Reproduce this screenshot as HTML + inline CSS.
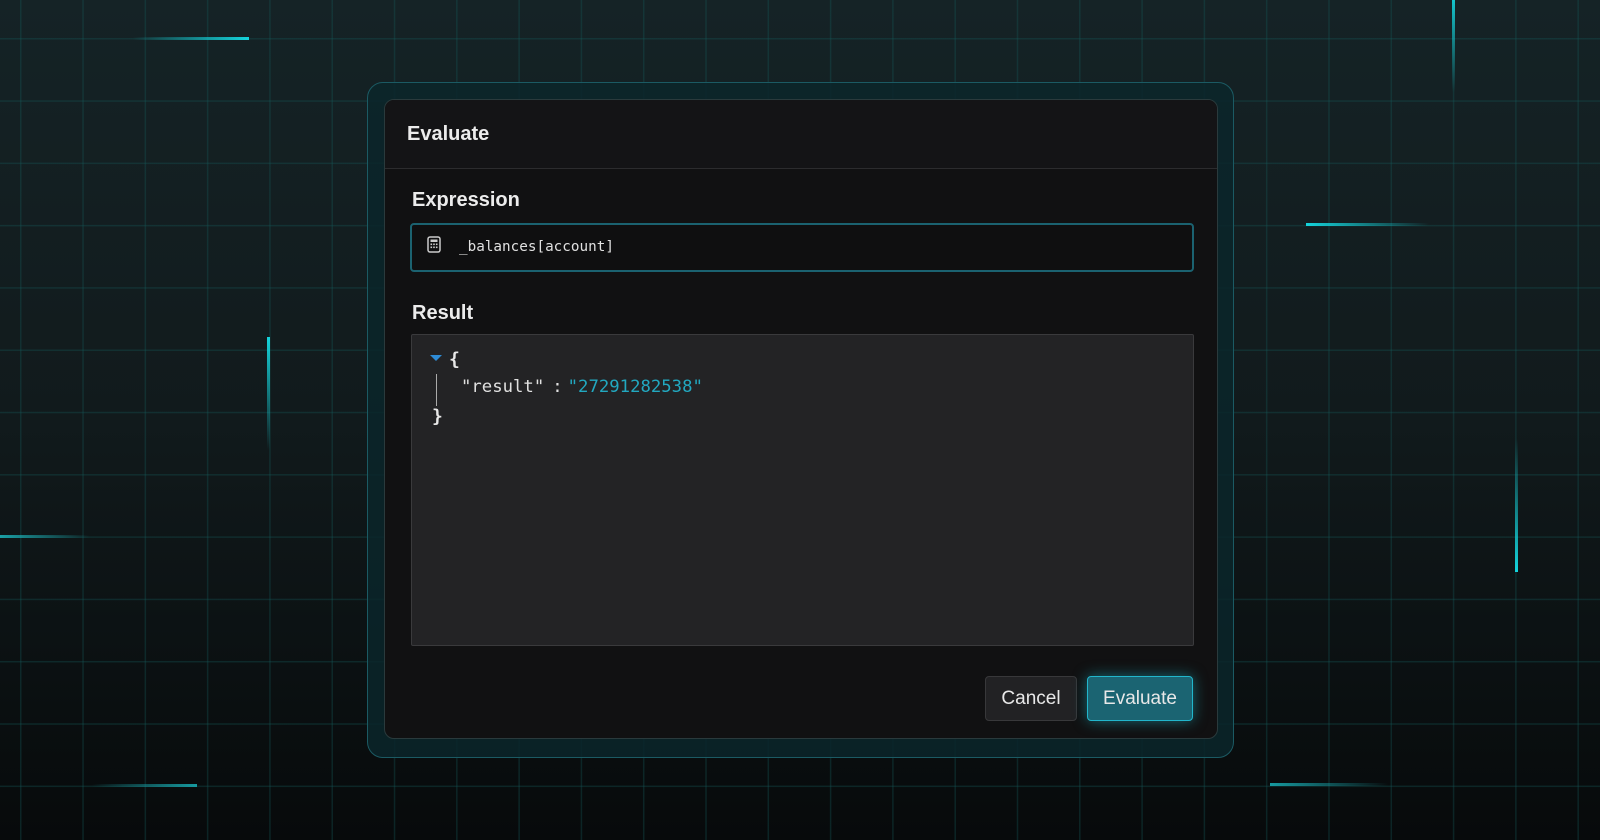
<!DOCTYPE html>
<html><head><meta charset="utf-8"><style>
*{box-sizing:border-box;margin:0;padding:0}
body{width:1600px;height:840px;overflow:hidden;position:relative;font-family:"Liberation Sans",sans-serif;
background:linear-gradient(180deg,#152326 0%,#111a1c 50%,#070a0b 100%);}
.grid{position:absolute;inset:0;
background-image:linear-gradient(90deg,rgba(20,90,90,.33) 1.5px,transparent 1.5px),linear-gradient(180deg,rgba(20,90,90,.33) 1.5px,transparent 1.5px);
background-size:62.3px 62.3px;background-position:20px 38px;}
.s{position:absolute}
.h{height:3px}
.v{width:3px}
.outer{position:absolute;left:367px;top:82px;width:867px;height:676px;border:1.5px solid #1b5a63;border-radius:16px;background:rgba(10,38,42,.85)}
.inner{position:absolute;left:384px;top:99px;width:834px;height:640px;border:1px solid #2a3a3c;border-radius:10px;background:#111112;overflow:hidden}
.hdr{height:69px;border-bottom:1px solid #2c2c2e;background:#141416;padding-left:22px;color:#ececec;font-weight:bold;font-size:20px;line-height:68px}
.lbl{position:absolute;color:#ececec;font-weight:bold;font-size:20px}
.inp{position:absolute;left:25px;top:123px;width:784px;height:49px;border:2px solid #1b6270;border-radius:4px;background:#0f0f10}
.mono{font-family:"DejaVu Sans Mono","Liberation Mono",monospace}
.res{position:absolute;left:26px;top:234px;width:783px;height:312px;border:1px solid #3a3a3c;border-radius:2px;background:#232325}
.btn{position:absolute;top:576px;height:45px;border-radius:4px;font-size:19px;color:#e8e8e8;text-align:center;line-height:43px}
</style></head><body>
<div class="grid"></div>
<div class="s h" style="left:133px;top:37px;width:116px;background:linear-gradient(90deg,transparent,#14d4dc)"></div>
<div class="s v" style="left:267px;top:337px;height:113px;background:linear-gradient(180deg,#14d4dc,transparent)"></div>
<div class="s h" style="left:0;top:535px;width:90px;background:linear-gradient(90deg,#1aa0a6,transparent)"></div>
<div class="s h" style="left:92px;top:784px;width:105px;background:linear-gradient(90deg,transparent,#169aa0)"></div>
<div class="s v" style="left:1452px;top:0;height:92px;background:linear-gradient(180deg,#14c4cc,transparent)"></div>
<div class="s h" style="left:1306px;top:223px;width:123px;background:linear-gradient(90deg,#14d4dc,transparent)"></div>
<div class="s v" style="left:1515px;top:439px;height:133px;background:linear-gradient(180deg,transparent,#14d4dc)"></div>
<div class="s h" style="left:1270px;top:783px;width:118px;background:linear-gradient(90deg,#169aa0,transparent)"></div>
<div class="outer"></div>
<div class="inner">
<div class="hdr">Evaluate</div>
<div class="lbl" style="left:27px;top:89px">Expression</div>
<div class="inp">
<svg style="position:absolute;left:15px;top:11px" width="14" height="17" viewBox="0 0 14 17"><rect x="1" y="1" width="12" height="15" rx="2" fill="none" stroke="#ccc" stroke-width="1.5"/><rect x="3.5" y="3.5" width="7" height="2.5" fill="#ccc"/><g fill="#ccc"><rect x="3.5" y="7.5" width="1.6" height="1.6"/><rect x="6.2" y="7.5" width="1.6" height="1.6"/><rect x="8.9" y="7.5" width="1.6" height="1.6"/><rect x="3.5" y="10.5" width="1.6" height="1.6"/><rect x="6.2" y="10.5" width="1.6" height="1.6"/><rect x="8.9" y="10.5" width="1.6" height="1.6"/></g></svg>
<div class="mono" style="position:absolute;left:47px;top:14px;font-size:14.3px;color:#e0e0e0">_balances[account]</div>
</div>
<div class="lbl" style="left:27px;top:202px">Result</div>
<div class="res mono">
<div style="position:absolute;left:18px;top:20px;width:0;height:0;border-left:6px solid transparent;border-right:6px solid transparent;border-top:6px solid #2e8bd6"></div>
<div style="position:absolute;left:37px;top:14px;font-size:18px;color:#e8e8e8;font-weight:bold">{</div>
<div style="position:absolute;left:24px;top:39px;width:1px;height:32px;background:#aaa"></div>
<div style="position:absolute;left:49px;top:42px;font-size:17.3px;color:#e0e0e0;white-space:nowrap">"result"<span style="margin:0 5px 0 8px">:</span><span style="color:#22a8c0">"27291282538"</span></div>
<div style="position:absolute;left:20px;top:71px;font-size:18px;color:#e8e8e8;font-weight:bold">}</div>
</div>
<div class="btn" style="left:600px;width:92px;background:#222224;border:1px solid #38383a">Cancel</div>
<div class="btn" style="left:702px;width:106px;background:#1b6472;border:1.5px solid #22b6cc;box-shadow:0 0 14px rgba(30,190,210,.5)">Evaluate</div>
</div>
</body></html>
